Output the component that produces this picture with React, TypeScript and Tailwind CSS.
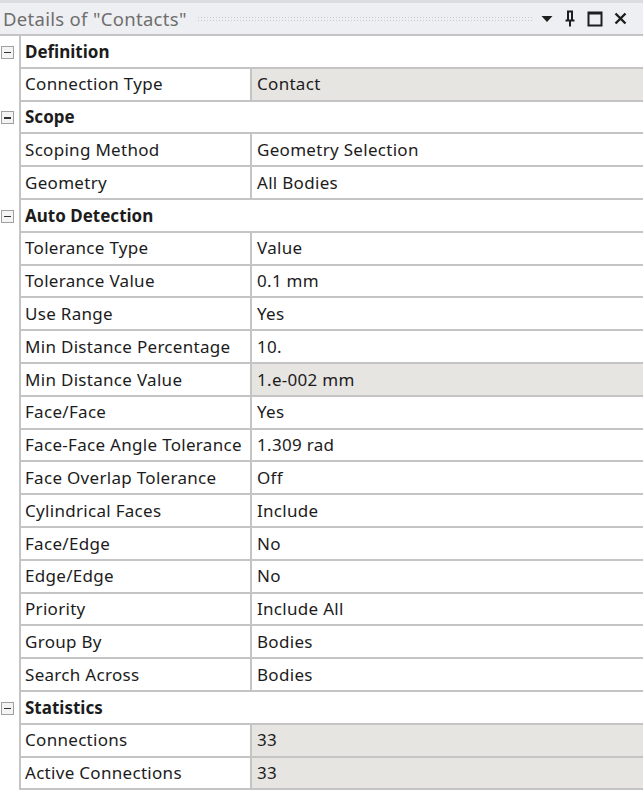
import React from 'react'

type Row =
  | { kind: 'group'; label: string }
  | { kind: 'prop'; label: string; value: string; readOnly?: boolean }

const rows: Row[] = [
  { kind: 'group', label: 'Definition' },
  { kind: 'prop', label: 'Connection Type', value: 'Contact', readOnly: true },
  { kind: 'group', label: 'Scope' },
  { kind: 'prop', label: 'Scoping Method', value: 'Geometry Selection' },
  { kind: 'prop', label: 'Geometry', value: 'All Bodies' },
  { kind: 'group', label: 'Auto Detection' },
  { kind: 'prop', label: 'Tolerance Type', value: 'Value' },
  { kind: 'prop', label: 'Tolerance Value', value: '0.1 mm' },
  { kind: 'prop', label: 'Use Range', value: 'Yes' },
  { kind: 'prop', label: 'Min Distance Percentage', value: '10.' },
  { kind: 'prop', label: 'Min Distance Value', value: '1.e-002 mm', readOnly: true },
  { kind: 'prop', label: 'Face/Face', value: 'Yes' },
  { kind: 'prop', label: 'Face-Face Angle Tolerance', value: '1.309 rad' },
  { kind: 'prop', label: 'Face Overlap Tolerance', value: 'Off' },
  { kind: 'prop', label: 'Cylindrical Faces', value: 'Include' },
  { kind: 'prop', label: 'Face/Edge', value: 'No' },
  { kind: 'prop', label: 'Edge/Edge', value: 'No' },
  { kind: 'prop', label: 'Priority', value: 'Include All' },
  { kind: 'prop', label: 'Group By', value: 'Bodies' },
  { kind: 'prop', label: 'Search Across', value: 'Bodies' },
  { kind: 'group', label: 'Statistics' },
  { kind: 'prop', label: 'Connections', value: '33', readOnly: true },
  { kind: 'prop', label: 'Active Connections', value: '33', readOnly: true }
]

function CollapseBox() {
  return (
    <div className="flex h-[13px] w-[13px] items-center justify-center border border-[#a0a0a0] bg-[#f4f4f4]">
      <div className="h-[1.5px] w-[7px] bg-[#333]" />
    </div>
  )
}

function TitleBar() {
  return (
    <div className="flex h-[36px] items-center border-t-[3px] border-b-2 border-t-[#dcdde0] border-b-[#c4c4c4] bg-[#eeeff2] pl-[3px] pr-[16px]">
      <span className="whitespace-nowrap text-[18.5px] text-[#6e6e6e]">Details of "Contacts"</span>
      <div className="ml-[10px] mr-[8px] h-[6px] flex-1 bg-[radial-gradient(#c8c8c8_0.8px,transparent_1px)] bg-[length:3px_3px]" />
      <div className="flex items-center gap-[11px]">
        <svg width="12" height="8" viewBox="0 0 12 8">
          <path d="M0.5 1h11L6 7z" fill="#1e1e1e" />
        </svg>
        <svg width="12" height="17" viewBox="0 0 12 17">
          <path d="M3 1.5h6M4 1.5v9M8 1.5v9M1.5 10.5h9M6 10.5v6" stroke="#1e1e1e" strokeWidth="2" fill="none" />
        </svg>
        <svg width="16" height="16" viewBox="0 0 16 16">
          <rect x="1.5" y="1.5" width="13" height="13" stroke="#1e1e1e" strokeWidth="2" fill="none" />
          <path d="M1.5 2.5h13" stroke="#1e1e1e" strokeWidth="2" />
        </svg>
        <svg width="13" height="13" viewBox="0 0 13 13">
          <path d="M1.5 1.5l10 10M11.5 1.5l-10 10" stroke="#1e1e1e" strokeWidth="2.4" />
        </svg>
      </div>
    </div>
  )
}

export default function App() {
  return (
    <div className="h-[795px] w-[643px] overflow-hidden bg-white font-['Noto_Sans',sans-serif] text-[17px] tracking-[0.3px] text-[#1c1c1c]">
      <TitleBar />
      <div className="flex flex-col">
        {rows.map((row) => (
          <div key={row.label} className="flex h-[32.8px]">
            <div className="flex w-[19px] items-center pl-[1px]">
              {row.kind === 'group' && <CollapseBox />}
            </div>
            {row.kind === 'group' ? (
              <div className="flex flex-1 items-center border-b-2 border-l-2 border-[#c4c4c4] pl-[4px] font-bold tracking-normal">
                {row.label}
              </div>
            ) : (
              <div className="flex flex-1 border-b-2 border-l-2 border-[#c4c4c4]">
                <div className="flex w-[231px] items-center whitespace-nowrap border-r-2 border-[#c4c4c4] pl-[4px]">
                  {row.label}
                </div>
                <div
                  className={`flex flex-1 items-center pl-[5px] ${row.readOnly ? 'bg-[#e6e5e2]' : 'bg-white'}`}
                >
                  {row.value}
                </div>
              </div>
            )}
          </div>
        ))}
      </div>
    </div>
  )
}
